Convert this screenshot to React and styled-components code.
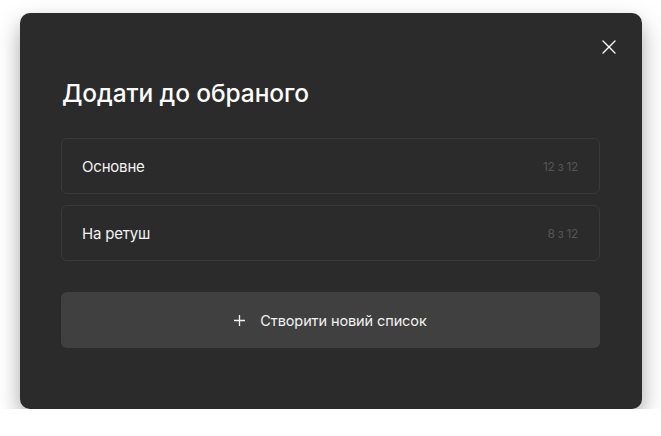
import React from "react";
import styled, { createGlobalStyle } from "styled-components";

const Global = createGlobalStyle`
  html, body { margin: 0; padding: 0; background: #ffffff; }
  body { font-family: Inter, "Noto Sans", sans-serif; -webkit-font-smoothing: antialiased; }
`;

const Page = styled.div`
  padding: 13px 19px 0 20px;
`;

const Modal = styled.div`
  position: relative;
  box-sizing: border-box;
  height: 396px;
  background: #2b2b2b;
  border-radius: 10px;
  box-shadow: 0 10px 22px rgba(0, 0, 0, 0.35);
  padding: 65px 42px 0 41px;
  display: flex;
  flex-direction: column;
`;

const Close = styled.button`
  position: absolute;
  top: 24px;
  right: 23px;
  width: 20px;
  height: 20px;
  padding: 0;
  border: 0;
  background: transparent;
  display: flex;
  align-items: center;
  justify-content: center;
  cursor: pointer;
`;

const Title = styled.h2`
  margin: 0 0 30px 1px;
  font-size: 24.5px;
  line-height: 30px;
  font-weight: 500;
  color: #ffffff;
  letter-spacing: -0.1px;
`;

const List = styled.div`
  display: flex;
  flex-direction: column;
  gap: 11px;
`;

const Row = styled.div`
  box-sizing: border-box;
  height: 56px;
  display: flex;
  align-items: center;
  justify-content: space-between;
  padding: 0 21px 0 20px;
  border: 1px solid #3a3a3a;
  border-radius: 6px;
  background: #2b2b2b;
`;

const RowName = styled.span`
  font-size: 15px;
  color: #f2f2f2;
  letter-spacing: -0.2px;
`;

const RowCount = styled.span`
  font-size: 12px;
  color: #555555;
  letter-spacing: -0.3px;
`;

const CreateButton = styled.button`
  margin-top: 31px;
  height: 56px;
  border: 0;
  border-radius: 6px;
  background: #404040;
  color: #f2f2f2;
  font-family: inherit;
  font-size: 14.5px;
  letter-spacing: -0.1px;
  display: flex;
  align-items: center;
  justify-content: center;
  gap: 15px;
  cursor: pointer;
`;

const lists = [
  { name: "Основне", count: "12 з 12" },
  { name: "На ретуш", count: "8 з 12" },
];

export default function App() {
  return (
    <Page>
      <Global />
      <Modal>
        <Close aria-label="Закрити">
          <svg width="14" height="14" viewBox="0 0 14 14">
            <path d="M1 1L13 13M13 1L1 13" stroke="#ffffff" strokeWidth="1.4" strokeLinecap="round" />
          </svg>
        </Close>
        <Title>Додати до обраного</Title>
        <List>
          {lists.map((l) => (
            <Row key={l.name}>
              <RowName>{l.name}</RowName>
              <RowCount>{l.count}</RowCount>
            </Row>
          ))}
        </List>
        <CreateButton>
          <svg width="11" height="11" viewBox="0 0 11 11">
            <path d="M5.5 0V11M0 5.5H11" stroke="#f2f2f2" strokeWidth="1.3" />
          </svg>
          Створити новий список
        </CreateButton>
      </Modal>
    </Page>
  );
}
